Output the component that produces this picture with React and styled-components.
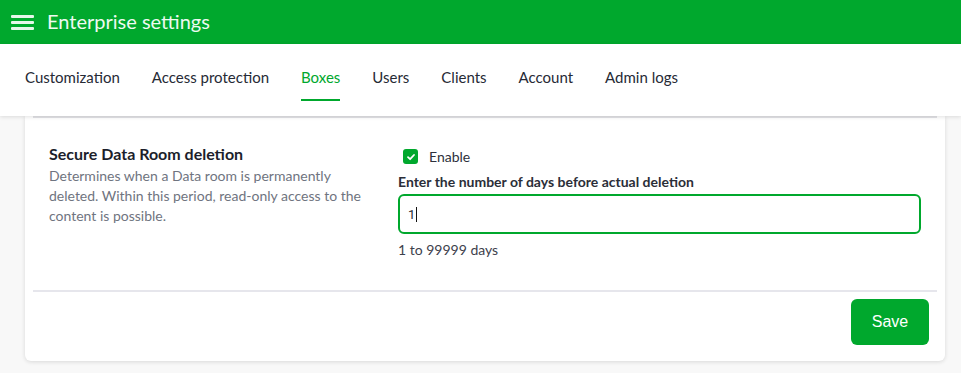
import React from "react";
import styled, { createGlobalStyle } from "styled-components";

const Global = createGlobalStyle`
  html, body { margin: 0; padding: 0; background: #f8f8f8; }
  body { font-family: Lato, "Open Sans", sans-serif; -webkit-font-smoothing: antialiased; }
  * { box-sizing: border-box; }
`;

const Page = styled.div`
  width: 961px;
  height: 373px;
  overflow: hidden;
  display: flex;
  flex-direction: column;
  background: #f8f8f8;
`;

const Header = styled.header`
  height: 44px;
  background: #00a82d;
  display: flex;
  align-items: center;
  padding-left: 11px;
  gap: 13px;
  flex-shrink: 0;
`;

const Burger = styled.div`
  display: flex;
  flex-direction: column;
  gap: 3px;
  width: 23px;
  & > span {
    display: block;
    height: 3px;
    background: #e6f7ea;
    border-radius: 1px;
  }
`;

const Title = styled.h1`
  margin: 0;
  font-size: 20px;
  font-weight: 400;
  color: #eefaf1;
  position: relative;
  top: -1px;
`;

const TabBar = styled.nav`
  height: 72px;
  background: #fff;
  display: flex;
  align-items: stretch;
  gap: 32px;
  padding-left: 25px;
  box-shadow: 0 1px 4px rgba(0, 0, 0, 0.12);
  position: relative;
  z-index: 2;
  flex-shrink: 0;
`;

const Tab = styled.div`
  display: flex;
  align-items: center;
  font-size: 15px;
  color: ${(p) => (p.$active ? "#00a82d" : "#262a35")};
  position: relative;
  padding-bottom: 6px;
  &::after {
    content: "";
    display: ${(p) => (p.$active ? "block" : "none")};
    position: absolute;
    left: 0;
    right: 0;
    top: 55px;
    height: 2px;
    background: #00a82d;
  }
`;

const Main = styled.main`
  padding: 0 16px 0 25px;
  flex: 1;
`;

const Card = styled.section`
  background: #fff;
  border-radius: 0 0 6px 6px;
  box-shadow: 0 1px 4px rgba(0, 0, 0, 0.13);
  padding: 0 8px 16px;
`;

const Divider = styled.div`
  height: 2px;
  background: ${(p) => p.$color || "#e6e6ec"};
`;

const Row = styled.div`
  display: grid;
  grid-template-columns: 349px 1fr;
  padding: 24px 16px 31px 16px;
`;

const Info = styled.div`
  display: flex;
  flex-direction: column;
  padding-right: 20px;
`;

const SettingTitle = styled.div`
  font-size: 16px;
  font-weight: 700;
  color: #1c1e2b;
  line-height: 24px;
`;

const Desc = styled.div`
  font-size: 14px;
  color: #6f7480;
  line-height: 20px;
`;

const Controls = styled.div`
  display: flex;
  flex-direction: column;
  padding-top: 7px;
`;

const CheckRow = styled.label`
  display: flex;
  align-items: center;
  gap: 11px;
  margin-left: 5px;
  font-size: 14px;
  color: #2d313c;
  height: 15px;
`;

const Box = styled.span`
  width: 15px;
  height: 15px;
  border-radius: 3px;
  background: #00a82d;
  display: flex;
  align-items: center;
  justify-content: center;
`;

const FieldLabel = styled.div`
  margin-top: 9px;
  font-size: 14px;
  font-weight: 700;
  color: #2b2e38;
  line-height: 18px;
`;

const Input = styled.div`
  margin-top: 3px;
  height: 40px;
  border: 2px solid #00a82d;
  border-radius: 6px;
  display: flex;
  align-items: center;
  padding-left: 8px;
  font-size: 13px;
  color: #2b2e38;
  font-family: Roboto, Arial, sans-serif;
`;

const Caret = styled.span`
  display: inline-block;
  width: 1px;
  height: 15px;
  background: #111;
  margin-left: 1px;
`;

const Hint = styled.div`
  margin-top: 7px;
  font-size: 14px;
  color: #3d414c;
  line-height: 18px;
`;

const Footer = styled.div`
  display: flex;
  justify-content: flex-end;
  padding: 7px 8px 0 0;
`;

const SaveButton = styled.button`
  width: 78px;
  height: 46px;
  border: none;
  border-radius: 6px;
  background: #00a82d;
  color: #fff;
  font-family: "Liberation Sans", Arial, sans-serif;
  font-size: 16px;
  cursor: pointer;
`;

export default function App() {
  const tabs = ["Customization", "Access protection", "Boxes", "Users", "Clients", "Account", "Admin logs"];
  return (
    <>
      <Global />
      <Page>
        <Header>
          <Burger>
            <span />
            <span />
            <span />
          </Burger>
          <Title>Enterprise settings</Title>
        </Header>
        <TabBar>
          {tabs.map((t) => (
            <Tab key={t} $active={t === "Boxes"}>
              {t}
            </Tab>
          ))}
        </TabBar>
        <Main>
          <Card>
            <Divider $color="#e2e2e6" />
            <Row>
              <Info>
                <SettingTitle>Secure Data Room deletion</SettingTitle>
                <Desc>
                  Determines when a Data room is permanently deleted. Within this period, read-only access to the
                  content is possible.
                </Desc>
              </Info>
              <Controls>
                <CheckRow>
                  <Box>
                    <svg width="10" height="10" viewBox="0 0 10 10">
                      <path d="M2 5.2 L4.1 7.2 L8 3" stroke="#fff" strokeWidth="1.8" fill="none" strokeLinecap="round" strokeLinejoin="round" />
                    </svg>
                  </Box>
                  Enable
                </CheckRow>
                <FieldLabel>Enter the number of days before actual deletion</FieldLabel>
                <Input>
                  1<Caret />
                </Input>
                <Hint>1 to 99999 days</Hint>
              </Controls>
            </Row>
            <Divider />
            <Footer>
              <SaveButton>Save</SaveButton>
            </Footer>
          </Card>
        </Main>
      </Page>
    </>
  );
}
